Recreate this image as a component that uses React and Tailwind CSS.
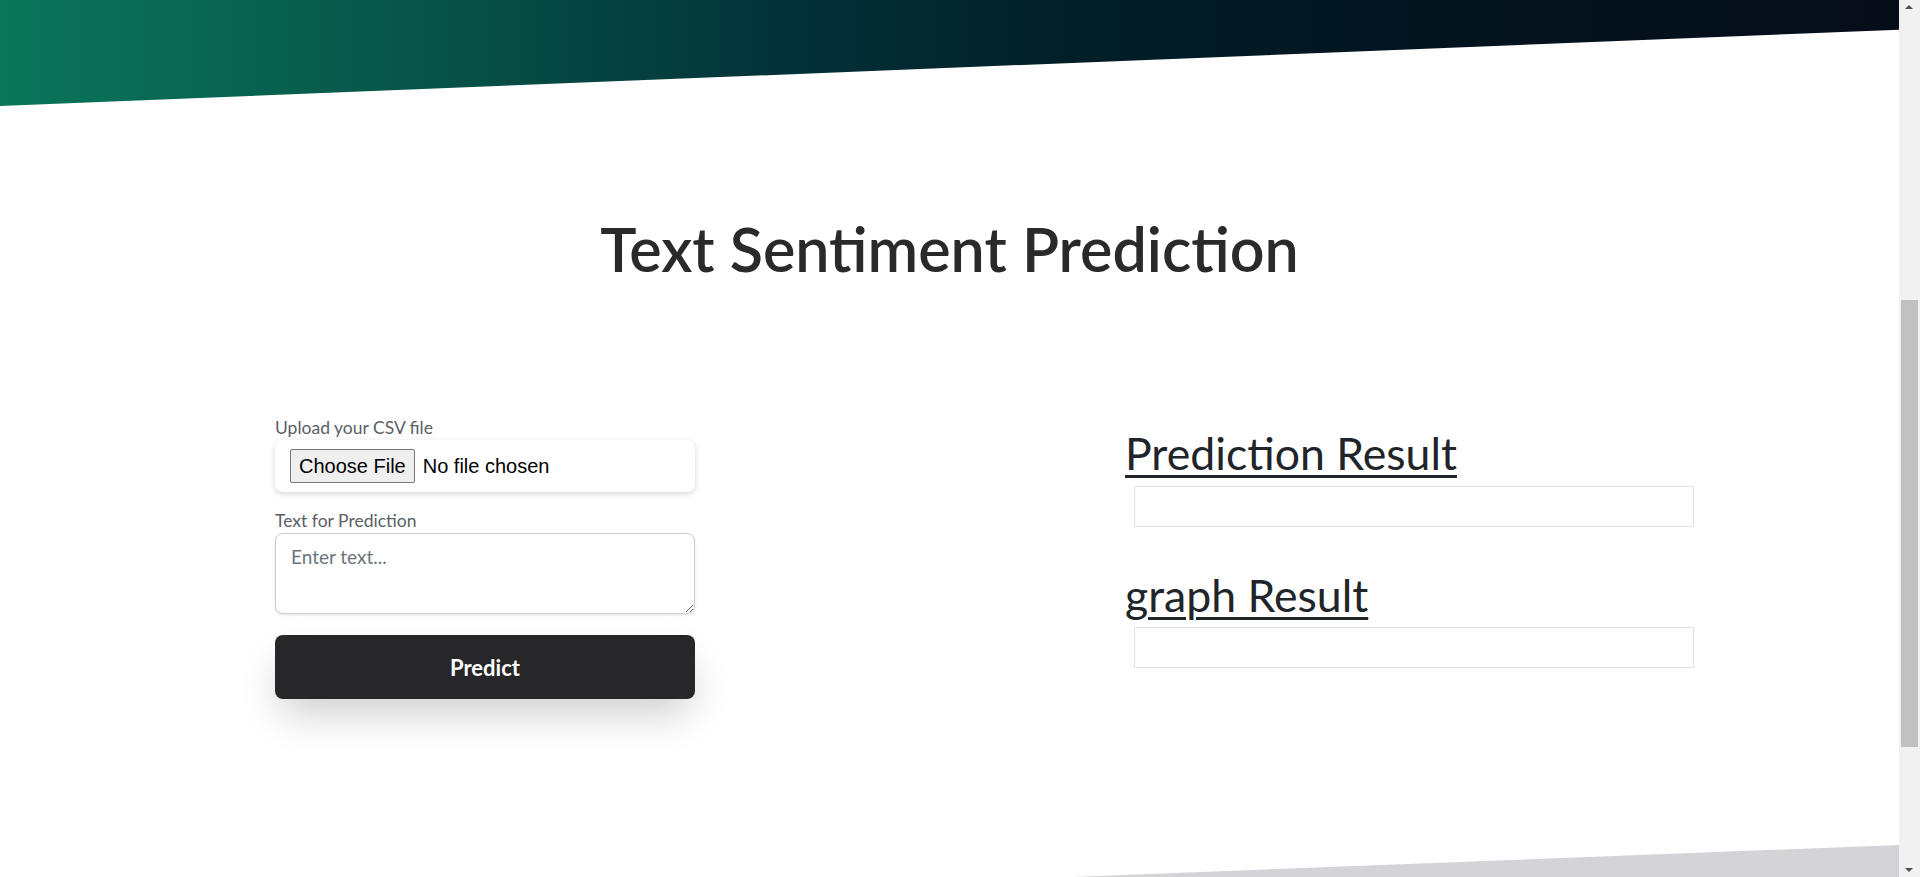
import React from 'react';

const FONT = "font-['Lato','Noto_Sans',sans-serif]";

const FakeScrollbar = () => (
    <div className="relative w-[21px] h-full bg-[#f1f1f1] shrink-0">
        {/* arrows + thumb sit over the track */}
        <div className="absolute top-[5px] left-[6px] w-0 h-0 border-l-[4px] border-r-[4px] border-b-[4px] border-l-transparent border-r-transparent border-b-[#505050]" />
        <div className="absolute top-[300px] left-[2px] w-[17px] h-[447px] bg-[#c1c1c1]" />
        <div className="absolute bottom-[5px] left-[6px] w-0 h-0 border-l-[4px] border-r-[4px] border-t-[4px] border-l-transparent border-r-transparent border-t-[#505050]" />
    </div>
);

const App = () => {
    return (
        <div className={`flex w-full h-[877px] overflow-hidden bg-white ${FONT}`}>
            <main className="flex-1 flex flex-col min-w-0">
                {/* Top gradient band */}
                <div className="h-[106px] w-full shrink-0 bg-[linear-gradient(to_right,#0b7659_0%,#07584a_20%,#03343a_40%,#022029_55%,#03141f_75%,#050d18_100%)] [clip-path:polygon(0_0,100%_0,100%_28%,0_100%)]" />

                {/* Title */}
                <h1 className="mt-[106px] text-center text-[61px] leading-[1.2] font-semibold text-[#2a2a2c]">
                    Text Sentiment Prediction
                </h1>

                {/* Form + results */}
                <div className="flex items-start mt-[131px] ml-[275px]">
                    <div className="w-[420px] flex flex-col">
                        <label className="text-[17.5px] leading-[24px] text-[#5a5f66]">Upload your CSV file</label>
                        <div className="h-[52px] flex items-center pl-[15px] bg-white rounded-lg shadow-[0_2px_6px_rgba(0,0,0,0.16)]">
                            <input
                                type="file"
                                className="font-['Liberation_Sans',Arial,sans-serif] text-[20px] text-black file:mr-[8px] file:px-[8px] file:py-[1px] file:border file:border-[#767676] file:bg-[#efefef] file:rounded-[2px] file:text-black"
                            />
                        </div>

                        <label className="mt-[17px] text-[17.5px] leading-[24px] text-[#5a5f66]">Text for Prediction</label>
                        <textarea
                            placeholder="Enter text..."
                            className="h-[81px] px-[15px] pt-[9px] text-[19px] leading-[1.5] text-[#212529] placeholder:text-[#6c757d] border border-[#cfcfcf] rounded-lg bg-white shadow-[0_1px_3px_rgba(0,0,0,0.12)] outline-none"
                        />

                        <button className="mt-[21px] h-[64px] rounded-lg bg-[#27272a] text-white text-[22px] font-bold shadow-[0_20px_40px_-6px_rgba(0,0,0,0.2)]">
                            Predict
                        </button>
                    </div>

                    <div className="ml-[430px] w-[569px] pt-[10px] flex flex-col">
                        <h2 className="text-[44.6px] leading-[1.2] text-[#212529] underline decoration-[3px] underline-offset-[5px]">
                            Prediction Result
                        </h2>
                        <div className="mt-[6px] ml-[9px] h-[41px] border border-[#e2e2e2]" />

                        <h2 className="mt-[41px] text-[44.6px] leading-[1.2] text-[#212529] underline decoration-[3px] underline-offset-[5px]">
                            graph Result
                        </h2>
                        <div className="mt-[6px] ml-[9px] h-[41px] border border-[#e2e2e2]" />
                    </div>
                </div>

                {/* Bottom grey wedge */}
                <div className="mt-auto h-[32px] w-full shrink-0 bg-[#d4d3d8] [clip-path:polygon(56.5%_100%,100%_0,100%_100%)]" />
            </main>
            <FakeScrollbar />
        </div>
    );
};

export default App;
